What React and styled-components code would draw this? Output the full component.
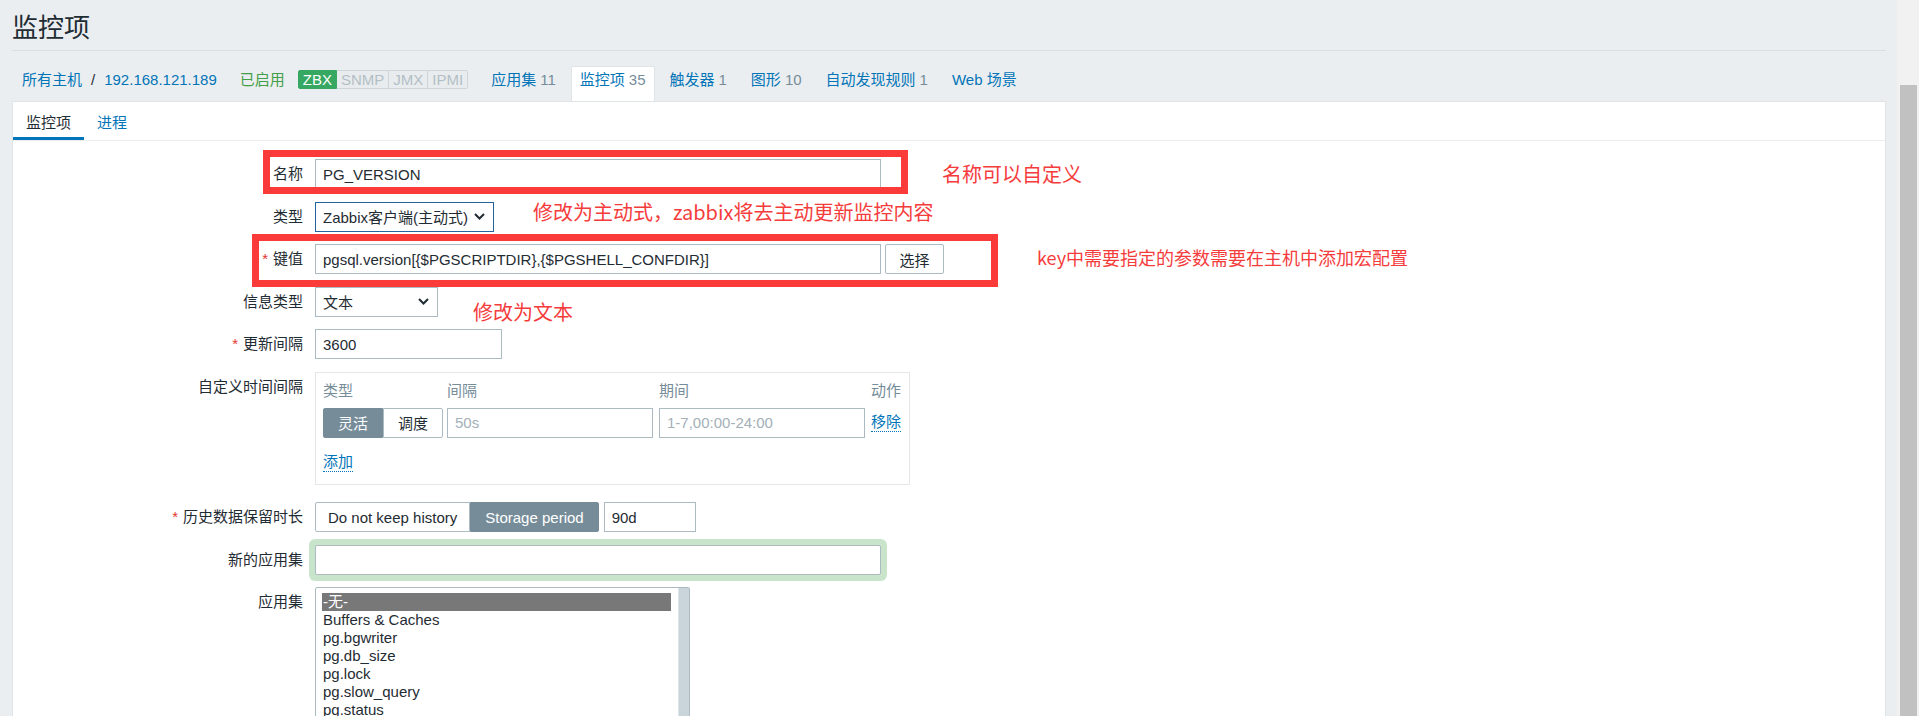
import React from "react";
import styled, { createGlobalStyle } from "styled-components";

const GlobalStyle = createGlobalStyle`
  *, *::before, *::after { box-sizing: border-box; }
  html, body, #root { margin: 0; padding: 0; height: 100%; }
  body {
    overflow: hidden;
    background: #ebeef0;
    color: #1f2c33;
    font-family: "Liberation Sans", Arial, "Noto Sans CJK SC", sans-serif;
    font-size: 15px;
  }
`;

const navItems = [
  { name: "应用集", count: "11" },
  { name: "监控项", count: "35", active: true },
  { name: "触发器", count: "1" },
  { name: "图形", count: "10" },
  { name: "自动发现规则", count: "1" },
  { name: "Web 场景" },
];

const badges = [
  { text: "ZBX", on: true },
  { text: "SNMP" },
  { text: "JMX" },
  { text: "IPMI" },
];

const appSets = [
  "-无-",
  "Buffers & Caches",
  "pg.bgwriter",
  "pg.db_size",
  "pg.lock",
  "pg.slow_query",
  "pg.status",
];

function Chevron() {
  return (
    <svg width="11" height="7" viewBox="0 0 11 7">
      <polyline
        points="1,1 5.5,5.5 10,1"
        fill="none"
        stroke="#1f2c33"
        strokeWidth="2"
      />
    </svg>
  );
}

function App() {
  return (
    <Shell>
      <GlobalStyle />
      <Main>
        <Header>
          <Title>监控项</Title>
        </Header>
        <NavRow>
          <NavItem>
            <Link>所有主机</Link>
            <Sep>/</Sep>
            <Link>192.168.121.189</Link>
          </NavItem>
          <NavItem $tight>
            <Status>已启用</Status>
            <Badges>
              {badges.map((b) => (
                <Badge key={b.text} $on={b.on}>
                  {b.text}
                </Badge>
              ))}
            </Badges>
          </NavItem>
          {navItems.map((it) => (
            <NavItem key={it.name} $active={it.active}>
              <Link>{it.name}</Link>
              {it.count && <Count>{it.count}</Count>}
            </NavItem>
          ))}
        </NavRow>

        <Panel>
          <TabBar>
            <Tab $active>监控项</Tab>
            <Tab>进程</Tab>
          </TabBar>

          <Form>
            <Row>
              <Label>名称</Label>
              <Input $w={566} readOnly value="PG_VERSION" />
            </Row>
            <Row>
              <Label>类型</Label>
              <Select $w={179} $focus>
                Zabbix客户端(主动式)
                <Chevron />
              </Select>
            </Row>
            <Row>
              <Label>
                <Req>*</Req>键值
              </Label>
              <Input
                $w={566}
                readOnly
                value="pgsql.version[{$PGSCRIPTDIR},{$PGSHELL_CONFDIR}]"
              />
              <Button>选择</Button>
            </Row>
            <Row>
              <Label>信息类型</Label>
              <Select $w={123}>
                文本
                <Chevron />
              </Select>
            </Row>
            <Row>
              <Label>
                <Req>*</Req>更新间隔
              </Label>
              <Input $w={187} readOnly value="3600" />
            </Row>
            <Row $after={5}>
              <Label>自定义时间间隔</Label>
              <IntervalTable>
                <HeadCell>类型</HeadCell>
                <HeadCell>间隔</HeadCell>
                <HeadCell>期间</HeadCell>
                <HeadCell>动作</HeadCell>
                <Segmented>
                  <Seg $on $pad={14}>灵活</Seg>
                  <Seg $pad={14}>调度</Seg>
                </Segmented>
                <Input $w={206} readOnly placeholder="50s" />
                <Input $w={206} readOnly placeholder="1-7,00:00-24:00" />
                <DottedLink>移除</DottedLink>
                <AddLink>添加</AddLink>
              </IntervalTable>
            </Row>
            <Row>
              <Label>
                <Req>*</Req>历史数据保留时长
              </Label>
              <Segmented>
                <Seg $pad={12}>Do not keep history</Seg>
                <Seg $on $pad={14}>Storage period</Seg>
              </Segmented>
              <Input $w={92} $gap={5} readOnly value="90d" />
            </Row>
            <Row>
              <Label>新的应用集</Label>
              <Input $w={566} $glow readOnly value="" />
            </Row>
            <Row>
              <Label>应用集</Label>
              <ListBox>
                <Options>
                  {appSets.map((s, i) => (
                    <Option key={s} $on={i === 0}>
                      {s}
                    </Option>
                  ))}
                </Options>
                <ListScroll />
              </ListBox>
            </Row>
          </Form>

          <Mark $x={250} $y={48} $w={645} $h={44} />
          <Mark $x={239} $y={132} $w={746} $h={53} />
          <Note $x={929} $y={62}>名称可以自定义</Note>
          <Note $x={520} $y={100}>修改为主动式，zabbix将去主动更新监控内容</Note>
          <Note $x={1024} $y={146} $size={18}>
            key中需要指定的参数需要在主机中添加宏配置
          </Note>
          <Note $x={460} $y={200}>修改为文本</Note>
        </Panel>
      </Main>
      <ScrollTrack>
        <ScrollThumb />
      </ScrollTrack>
    </Shell>
  );
}

export default App;

const Shell = styled.div`
  display: flex;
  height: 100vh;
`;

const Main = styled.div`
  flex: 1;
  min-width: 0;
  display: flex;
  flex-direction: column;
  padding: 0 11px 0 12px;
  overflow: hidden;
`;

const Header = styled.div`
  flex: none;
  height: 51px;
  padding-top: 5px;
  display: flex;
  align-items: center;
  border-bottom: 1px solid #d9dee1;
`;

const Title = styled.h1`
  margin: 0;
  font-size: 26px;
  font-weight: normal;
  line-height: 1;
  color: #1f2c33;
`;

const NavRow = styled.div`
  flex: none;
  height: 50px;
  display: flex;
  align-items: flex-end;
  gap: 6px;
  padding-left: 1px;
`;

const NavItem = styled.div`
  height: 35px;
  display: flex;
  align-items: center;
  gap: 4px;
  padding: 0 ${(p) => (p.$tight ? "7px" : "8px")} 9px;
  line-height: 18px;
  white-space: nowrap;
  background: ${(p) => (p.$active ? "#fff" : "transparent")};
  border: 1px solid ${(p) => (p.$active ? "#dfe4e7" : "transparent")};
  border-bottom: none;
  border-radius: 2px 2px 0 0;
`;

const Link = styled.span`
  color: #0275b8;
`;

const Count = styled.span`
  color: #768d99;
`;

const Sep = styled.span`
  color: #1f2c33;
  margin: 0 5px;
`;

const Status = styled.span`
  color: #429e47;
`;

const Badges = styled.div`
  display: flex;
  margin-left: 9px;
`;

const Badge = styled.span`
  height: 19px;
  line-height: 17px;
  padding: 0 4px;
  border: 1px solid ${(p) => (p.$on ? "#37a862" : "#cfd6da")};
  border-left-width: ${(p) => (p.$on ? "1px" : "0")};
  background: ${(p) => (p.$on ? "#37a862" : "#e8ecee")};
  color: ${(p) => (p.$on ? "#fff" : "#b3bfc6")};
  &:first-child {
    border-radius: 2px 0 0 2px;
  }
  &:last-child {
    border-radius: 0 2px 2px 0;
  }
`;

const Panel = styled.div`
  position: relative;
  flex: 1;
  min-height: 0;
  background: #fff;
  border: 1px solid #dfe4e7;
  border-bottom: none;
`;

const TabBar = styled.div`
  display: flex;
  height: 39px;
  border-bottom: 1px solid #ebeef0;
`;

const Tab = styled.div`
  height: 38px;
  padding: 3px 13px 0;
  display: flex;
  align-items: center;
  border-bottom: 3px solid ${(p) => (p.$active ? "#0275b8" : "transparent")};
  color: ${(p) => (p.$active ? "#1f2c33" : "#0275b8")};
`;

const Form = styled.div`
  display: flex;
  flex-direction: column;
  gap: 12.5px;
  padding-top: 18px;
`;

const Row = styled.div`
  display: flex;
  align-items: flex-start;
  gap: 12px;
  margin-bottom: ${(p) => p.$after || 0}px;
`;

const Label = styled.div`
  flex: none;
  width: 290px;
  text-align: right;
  line-height: 30px;
  white-space: nowrap;
`;

const Req = styled.span`
  color: #e33734;
  margin-right: 5px;
`;

const Input = styled.input`
  flex: none;
  width: ${(p) => p.$w}px;
  height: 30px;
  margin-left: ${(p) => (p.$gap ? p.$gap - 12 : 0)}px;
  padding: 0 7px;
  border: 1px solid #acbbc2;
  border-radius: ${(p) => (p.$glow ? "2px" : "0")};
  box-shadow: ${(p) => (p.$glow ? "0 0 0 6px #c8e4cb" : "none")};
  background: #fff;
  color: #1f2c33;
  font: inherit;
  outline: none;
  &::placeholder {
    color: #a3b0b8;
  }
`;

const Select = styled.div`
  flex: none;
  width: ${(p) => p.$w}px;
  height: 30px;
  display: flex;
  align-items: center;
  justify-content: space-between;
  padding: 0 8px 0 7px;
  border: 1px solid ${(p) => (p.$focus ? "#24629e" : "#acbbc2")};
  background: #fff;
  white-space: nowrap;
`;

const Button = styled.div`
  height: 30px;
  width: 59px;
  margin-left: -8px;
  display: flex;
  align-items: center;
  justify-content: center;
  border: 1px solid #acbbc2;
  border-radius: 2px;
  background: #fff;
`;

const IntervalTable = styled.div`
  width: 595px;
  display: grid;
  grid-template-columns: 118px 206px 206px 1fr;
  column-gap: 6px;
  row-gap: 8px;
  padding: 9px 7px 12px 7px;
  border: 1px solid #e4e8ea;
`;

const HeadCell = styled.div`
  line-height: 18px;
  color: #768d99;
`;

const Segmented = styled.div`
  display: flex;
  height: 30px;
`;

const Seg = styled.div`
  flex: 1;
  height: 30px;
  padding: 0 ${(p) => p.$pad}px;
  display: flex;
  align-items: center;
  justify-content: center;
  white-space: nowrap;
  border: 1px solid ${(p) => (p.$on ? "#768d99" : "#acbbc2")};
  background: ${(p) => (p.$on ? "#768d99" : "#fff")};
  color: ${(p) => (p.$on ? "#fff" : "#1f2c33")};
  &:first-child {
    border-radius: 2px 0 0 2px;
  }
  &:last-child {
    border-radius: 0 2px 2px 0;
  }
`;

const DottedLink = styled.span`
  align-self: center;
  justify-self: start;
  color: #0275b8;
  line-height: 18px;
  border-bottom: 1px dotted #0275b8;
`;

const AddLink = styled(DottedLink)`
  grid-column: 1 / -1;
  margin-top: 7px;
`;

const ListBox = styled.div`
  width: 375px;
  height: 170px;
  display: flex;
  border: 1px solid #acbbc2;
  border-radius: 2px 2px 0 0;
  background: #fff;
`;

const Options = styled.div`
  flex: 1;
  padding: 5px 7px 0 6px;
`;

const Option = styled.div`
  height: 18px;
  line-height: 18px;
  padding-left: 1px;
  white-space: nowrap;
  background: ${(p) => (p.$on ? "#787878" : "transparent")};
  color: ${(p) => (p.$on ? "#fff" : "#1f2c33")};
`;

const ListScroll = styled.div`
  width: 11px;
  background: #c9d4db;
  border-left: 1px solid #dde4e8;
`;

const Mark = styled.div`
  position: absolute;
  left: ${(p) => p.$x}px;
  top: ${(p) => p.$y}px;
  width: ${(p) => p.$w}px;
  height: ${(p) => p.$h}px;
  border: 7px solid #fb3a3a;
  pointer-events: none;
`;

const Note = styled.div`
  position: absolute;
  left: ${(p) => p.$x}px;
  top: ${(p) => p.$y}px;
  font-family: "Noto Sans CJK SC", sans-serif;
  font-size: ${(p) => p.$size || 20}px;
  line-height: 1;
  color: #f53c3c;
  white-space: nowrap;
`;

const ScrollTrack = styled.div`
  flex: none;
  width: 22px;
  background: #f1f1f1;
  padding: 85px 2px 0 3px;
`;

const ScrollThumb = styled.div`
  height: 100%;
  background: #c1c1c1;
`;
